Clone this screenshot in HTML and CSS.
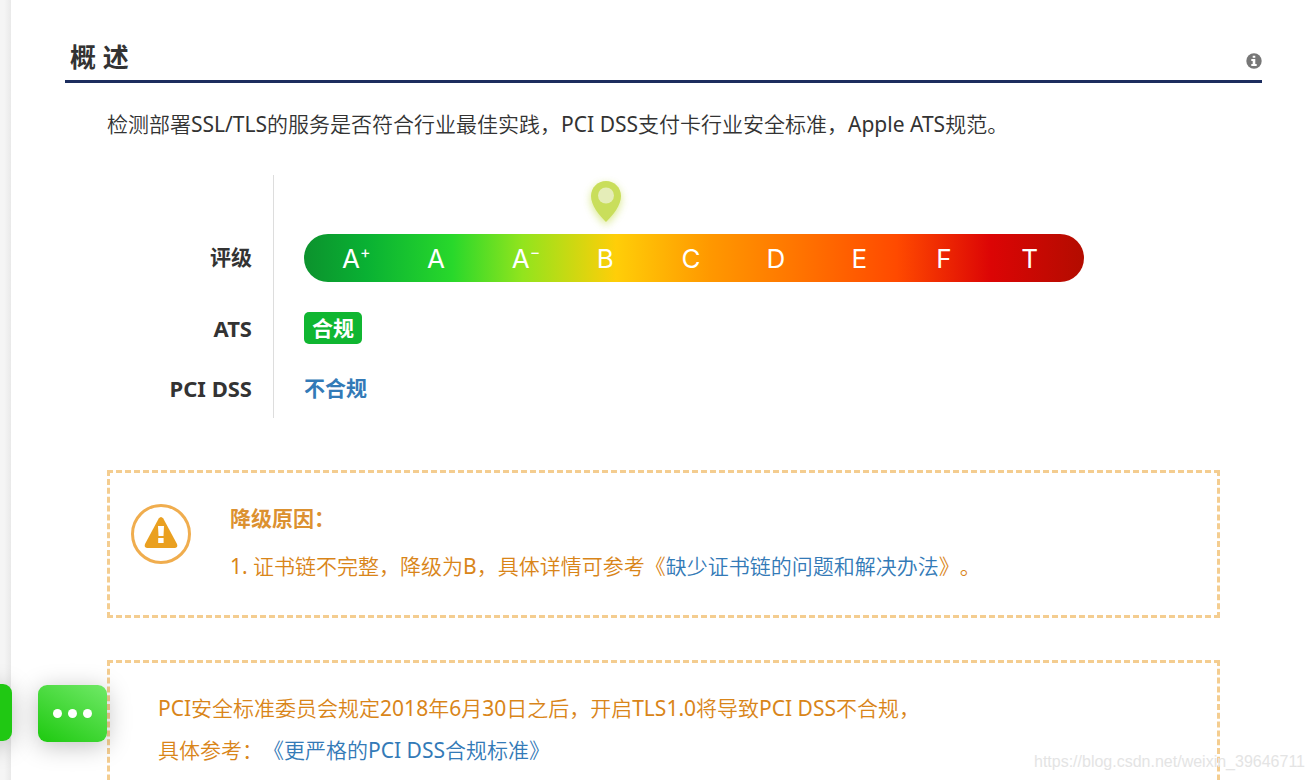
FILE: index.html
```html
<!DOCTYPE html>
<html lang="zh-CN">
<head>
<meta charset="utf-8">
<title>概述</title>
<link rel="stylesheet" href="styles.css">
</head>
<body>
<div class="page">
  <div class="gutter"></div>
  <main class="overview">
    <header class="section-head">
      <h1 class="section-title">概 述</h1>
      <button class="info" type="button" aria-label="说明">
        <svg viewBox="0 0 16 16" width="16" height="16"><circle cx="8" cy="8" r="7.7" fill="#777"/><path fill="#fff" d="M6.700 2.800h2.600v2H6.700zM5.300 6.100h4v4.800h1.400v2H5.300v-2h1.400V8H5.300z"/></svg>
      </button>
    </header>
    <div class="section-body">
      <p class="intro">检测部署SSL/TLS的服务是否符合行业最佳实践，PCI DSS支付卡行业安全标准，Apple ATS规范。</p>
      <dl class="summary">
        <dt class="label label-grade">评级</dt>
        <dd class="value value-grade">
          <div class="grade">
            <div class="pin-row">
              <svg class="pin" viewBox="0 0 30 42" width="30" height="42"><path fill="#c9de5b" d="M15 0C6.500 0 0 6.700 0 15c0 9.500 8 19 15 26 7-7 15-16.500 15-26C30 6.700 23.500 0 15 0z"/><circle cx="15" cy="14.500" r="8" fill="#e5edb8"/></svg>
            </div>
            <div class="scale">
              <span>A<sup>+</sup></span><span>A</span><span>A<sup>−</sup></span><span>B</span><span>C</span><span>D</span><span>E</span><span>F</span><span>T</span>
            </div>
          </div>
        </dd>
        <dt class="label">ATS</dt>
        <dd class="value"><span class="badge">合规</span></dd>
        <dt class="label">PCI DSS</dt>
        <dd class="value"><a class="status" href="#pci">不合规</a></dd>
      </dl>
      <section class="notice notice-warn">
        <svg class="warn" viewBox="0 0 60 60" width="60" height="60"><circle cx="30" cy="30" r="28.500" fill="none" stroke="#f0ad4e" stroke-width="3"/><path fill="#eaa020" d="M27.700 14.500q2.300-3.200 4.600 0L46 40q1.200 3.500-2 4H16q-3.200-.5-2-4z"/><path fill="#fff" d="M27 22h6l-.5 10h-5zM27.200 34h5.400v5h-5.400z"/></svg>
        <div class="notice-text">
          <h2 class="notice-title">降级原因：</h2>
          <p class="line">1. 证书链不完整，降级为B，具体详情可参考《<a href="#chain">缺少证书链的问题和解决办法</a>》。</p>
        </div>
      </section>
      <section class="notice notice-pci" id="pci">
        <p class="line">PCI安全标准委员会规定2018年6月30日之后，开启TLS1.0将导致PCI DSS不合规，</p>
        <p class="line">具体参考：<a href="#standard">《更严格的PCI DSS合规标准》</a></p>
      </section>
    </div>
  </main>
  <div class="side-tab"></div>
  <button class="chat" type="button" aria-label="更多"><i></i><i></i><i></i></button>
  <div class="watermark">https://blog.csdn.net/weixin_39646711</div>
</div>
</body>
</html>
```
FILE: styles.css
```css
* { box-sizing: border-box; }
body {
  margin: 0;
  background: #fff;
  color: #333;
  font-family: "Noto Sans", "Noto Sans CJK SC", sans-serif;
  font-size: 21px;
  line-height: 42px;
  text-spacing-trim: space-all;
}
h1, h2, p, dl, dd { margin: 0; }
a { color: #337ab7; text-decoration: none; }
button { border: 0; padding: 0; background: none; cursor: pointer; }
svg { display: block; }

.page { position: relative; display: flex; height: 100vh; overflow: hidden; }
.gutter { flex: 0 0 11px; background: linear-gradient(90deg, #f5f5f5 40%, #e9e9e9); }
.overview { flex: 1; min-width: 0; padding: 36px 50px 0 54px; }

.section-head {
  display: flex;
  align-items: center;
  justify-content: space-between;
  padding: 0 0 2px 5px;
  border-bottom: 3px solid #1c2d5e;
}
.section-title { font-size: 26px; line-height: 42px; font-weight: 700; }
.info { padding-top: 7px; }
.section-body { padding: 20px 42px 0; }
.intro, .line { font-family: "Noto Sans", "Noto Sans CJK SC DemiLight", "Noto Sans CJK SC Light", "Noto Sans CJK SC", sans-serif; }

.summary {
  display: grid;
  grid-template-columns: 167px 1fr;
  grid-template-rows: auto 60px 60px;
  margin-top: 30px;
}
.label {
  display: flex;
  align-items: center;
  justify-content: flex-end;
  padding-right: 21px;
  border-right: 1px solid #ddd;
  font-size: 22px;
  font-weight: 700;
}
.label-grade { align-items: flex-end; padding-bottom: 20px; font-size: 21px; }
.value { display: flex; align-items: center; padding-left: 30px; }
.value-grade { align-items: flex-start; padding-top: 6px; padding-bottom: 16px; }
.grade { flex: 0 1 780px; }
.pin-row { display: flex; padding-left: 287px; padding-bottom: 11px; }
.pin { overflow: visible; filter: drop-shadow(0 3px 4px rgba(201, 222, 91, .7)); }
.scale {
  display: grid;
  grid-template-columns: repeat(8, 1fr) auto;
  padding: 1px 46px 0 38px;
  border-radius: 24px;
  background: linear-gradient(90deg, #0c922d 0%, #09b133 8%, #28d82b 19%, #92e41d 28%, #ffce08 40%, #ff9800 52%, #ff7200 64%, #ff4a00 76%, #dc0505 88%, #b30c00 100%);
  color: #fff;
  font-family: Inter, sans-serif;
  font-size: 26px;
  line-height: 47px;
}
.scale sup { font-size: 16px; line-height: 16px; }
.badge {
  padding: 0 8px;
  border-radius: 5px;
  background: #10b631;
  color: #fff;
  font-weight: 700;
  line-height: 32px;
}
.status { font-weight: 700; }

.notice { border: 3px dashed #f4cd90; color: #d98519; }
.notice-warn { display: flex; gap: 39px; margin-top: 52px; padding: 24px 21px; }
.warn { flex: none; margin-top: 7px; }
.notice-title { color: #dc9130; font-size: 21px; line-height: 42px; padding-bottom: 6px; }
.notice-text { padding-bottom: 4px; }
.notice-pci { margin-top: 42px; padding: 24px 48px; }

.side-tab, .chat {
  position: absolute;
  box-shadow: 0 4px 24px rgba(0, 0, 0, .25);
}
.side-tab { left: -20px; top: 684px; width: 32px; height: 57px; border-radius: 9px; background: #20c813; }
.chat {
  left: 38px;
  top: 685px;
  display: flex;
  align-items: center;
  justify-content: center;
  gap: 6px;
  width: 69px;
  height: 57px;
  border-radius: 9px;
  background: linear-gradient(30deg, #1dc90f, #70e967);
}
.chat i { width: 9px; height: 9px; border-radius: 50%; background: #fff; }
.watermark {
  position: absolute;
  right: 7px;
  bottom: 6px;
  color: #e4e4e4;
  font: 16px/24px "Liberation Sans", sans-serif;
}
```
